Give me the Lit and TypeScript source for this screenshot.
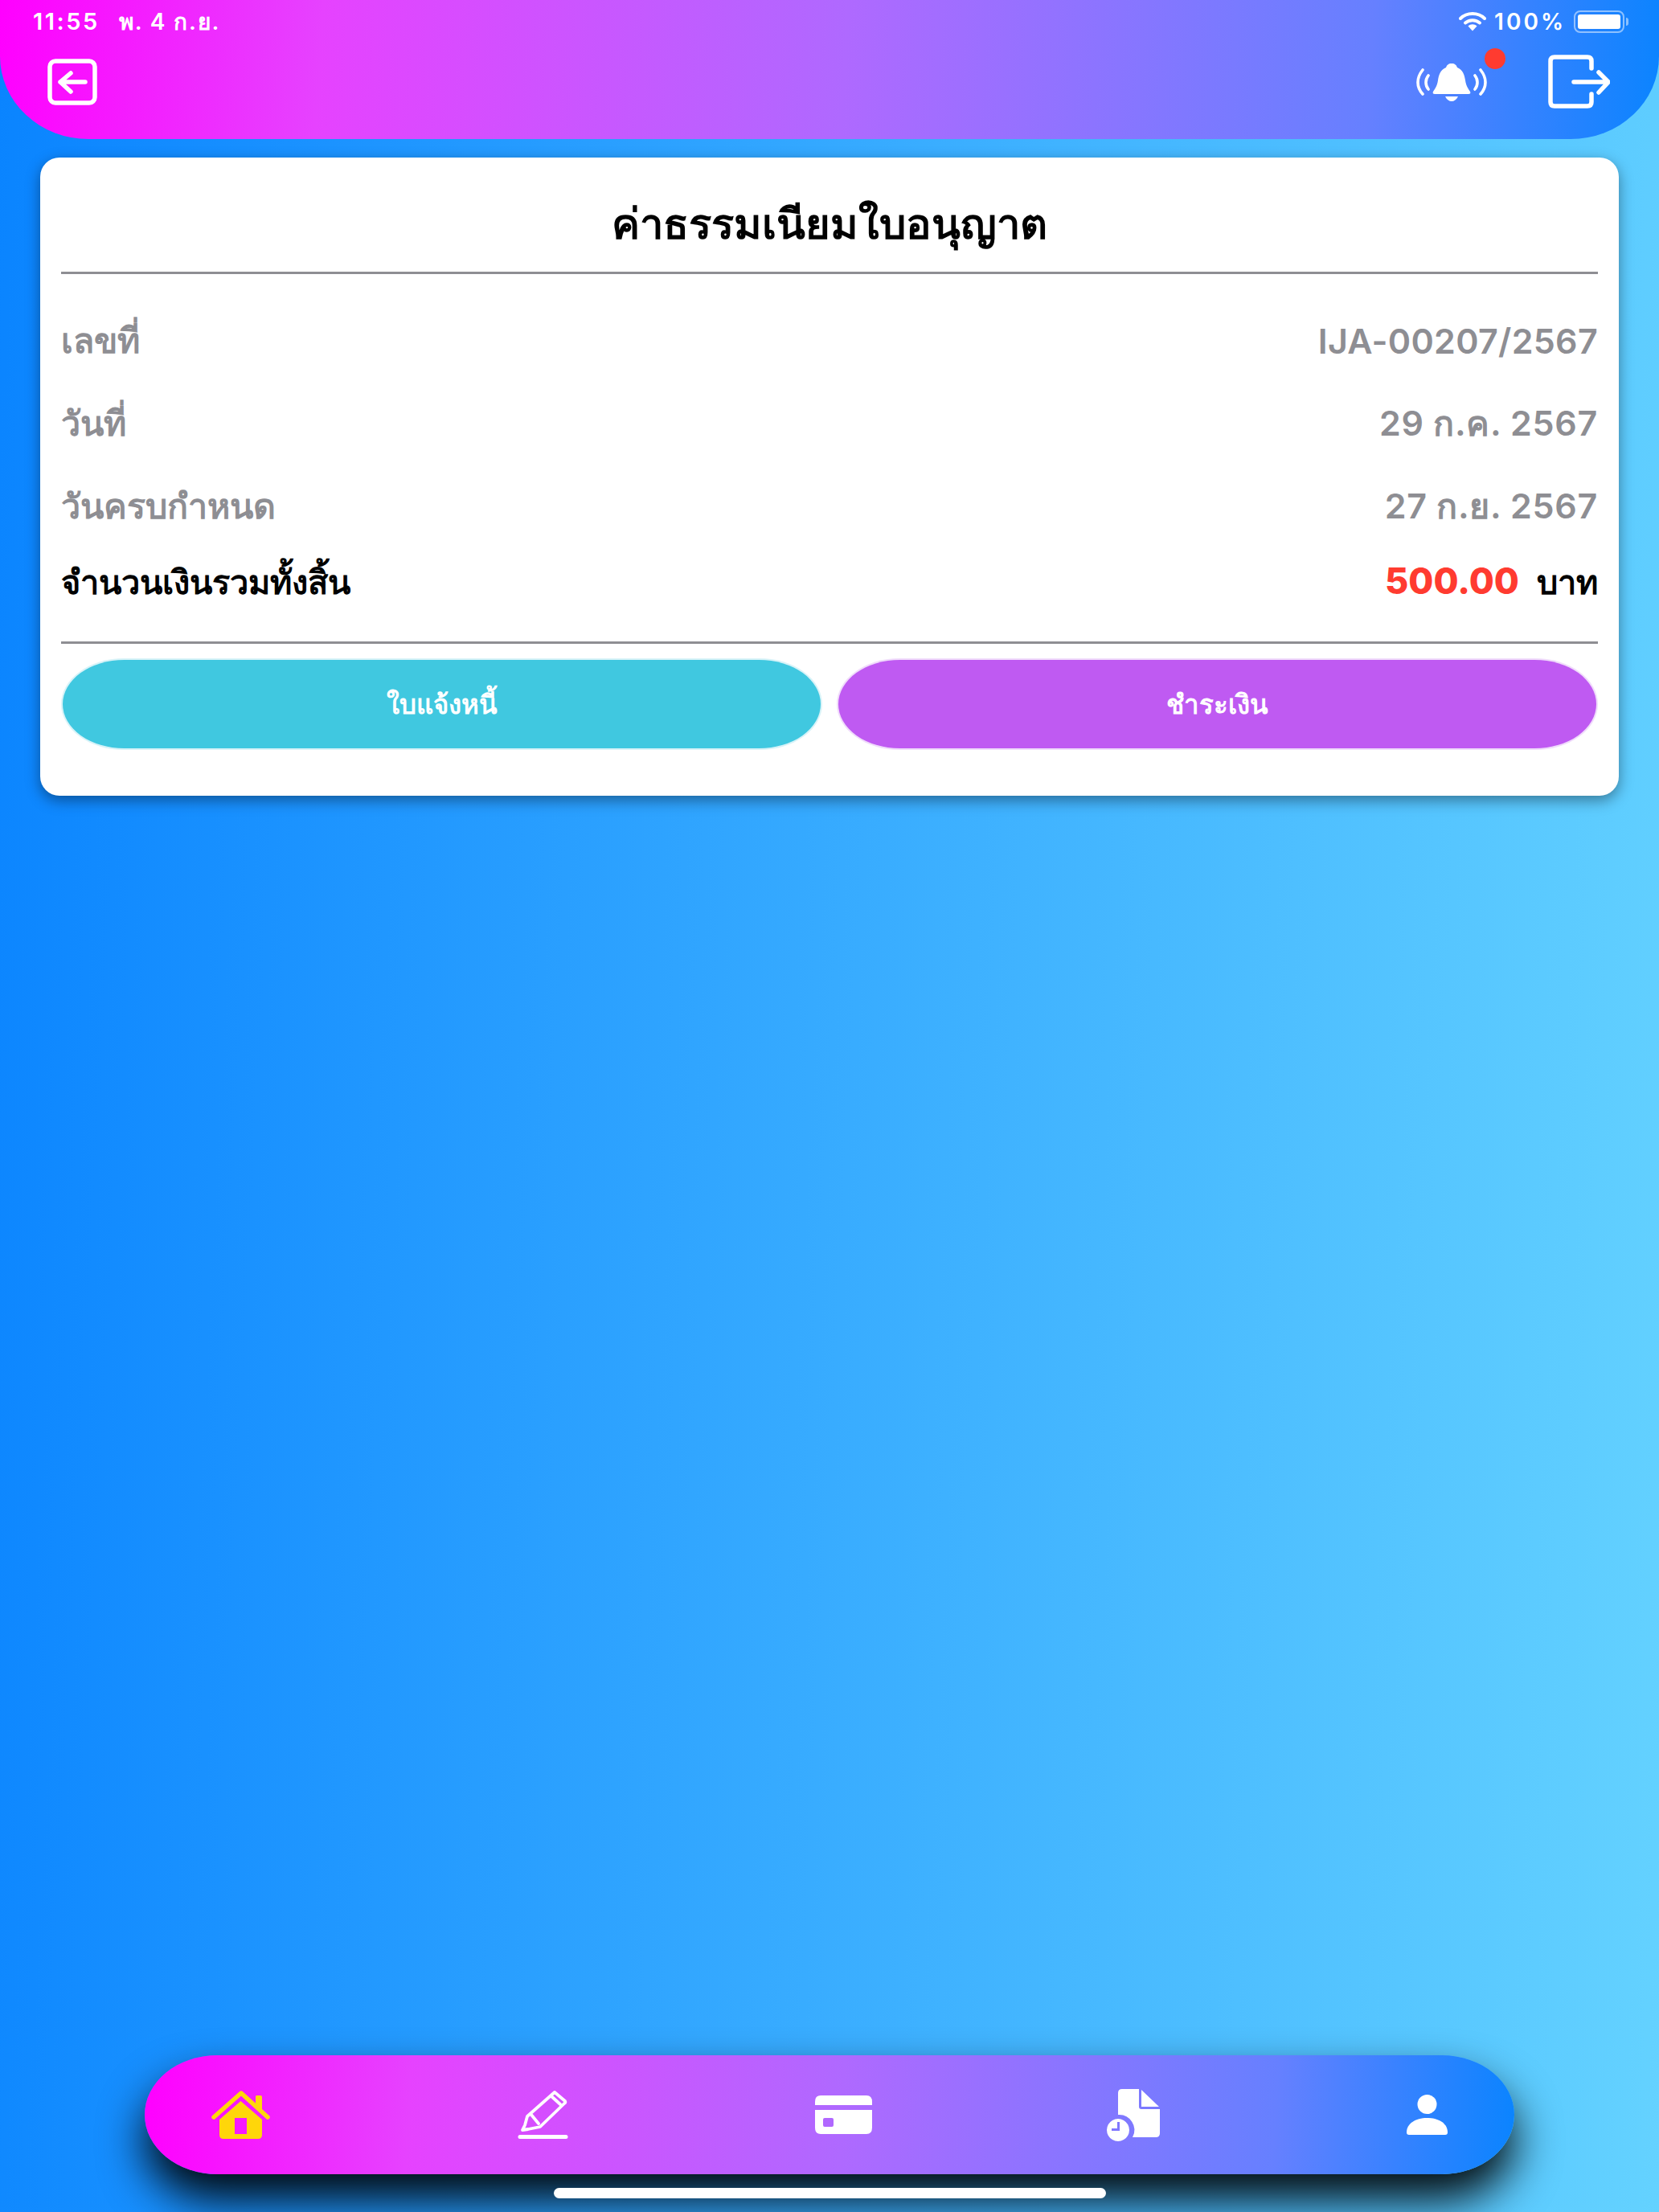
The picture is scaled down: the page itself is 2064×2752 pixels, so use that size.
import { LitElement, html, css } from "lit";
import { customElement } from "lit/decorators.js";

@customElement("app-root")
export class AppRoot extends LitElement {
  static styles = css`
    :host { display: block; width: 2064px; height: 2752px; overflow: hidden; font-family: Inter, "Noto Sans", "Liberation Sans", sans-serif; }
    svg { display: block; flex: none; }
    .page { width: 2064px; height: 2752px; display: flex; flex-direction: column; box-sizing: border-box; background: linear-gradient(93deg, #0a84ff 0%, #64d2ff 100%); }
    .header { height: 173px; box-sizing: border-box; flex: none; background: linear-gradient(94deg, #ff00ff 0%, #e642ff 19.4%, #af69ff 50.9%, #6680ff 82.4%, #0a84ff 100%); border-radius: 0 0 110px 110px / 0 0 103px 103px; display: flex; flex-direction: column; color: #fff; }
    .status { display: flex; align-items: center; height: 28px; margin-top: 13px; padding: 0 38px 0 41px; font-size: 28px; font-weight: 600; line-height: 28px; letter-spacing: 1px; }
    .time { width: 107px; font-size: 29px; letter-spacing: 2.5px; }
    .date { letter-spacing: 1.8px; }
    .spacer { flex: 1; }
    .pct { margin: 0 10px 0 10px; letter-spacing: 3px; }
    .battery { border: 2px solid rgba(255,255,255,.5); border-radius: 8px; padding: 3px; box-sizing: content-box; display: flex; width: 53px; height: 18px; }
    .battery i { display: block; flex: 1; background: #fff; border-radius: 3px; }
    .nub { width: 3px; height: 10px; margin-left: 2px; background: rgba(255,255,255,.5); border-radius: 0 3px 3px 0; }
    .actions { display: flex; align-items: flex-start; padding: 0 61px 0 59px; margin-top: 27px; }
    .back { margin-top: 5px; }
    .bell { position: relative; margin-top: 11px; margin-right: 76px; }
    .dot { position: absolute; width: 26px; height: 26px; border-radius: 50%; background: #ff3b30; left: 85px; top: -19px; }
    .card { margin: 23px 50px 0; height: 794px; box-sizing: border-box; flex: none; background: #fff; border-radius: 24px; box-shadow: 0 6px 18px rgba(0,0,0,.4); padding: 0 26px; display: flex; flex-direction: column; }
    .title { height: 145px; box-sizing: border-box; border-bottom: 3px solid #8e8e93; display: flex; align-items: center; justify-content: center; font-size: 52.500px; font-weight: 700; color: #000; padding-top: 22px; }
    .row { display: flex; justify-content: space-between; align-items: center; height: 103px; font-size: 43px; font-weight: 700; color: #8e8e93; }
    .label { font-size: 43px; }
    .value { font-weight: 600; letter-spacing: .3px; }
    .value.thai { letter-spacing: .7px; }
    .row.first { margin-top: 31px; }
    .total { margin-top: 17px; color: #000; font-weight: 700; font-size: 41.500px; border-bottom: 3px solid #8e8e93; padding-bottom: 48px; box-sizing: content-box; height: 52px; }
    .amount { color: #ff3b30; font-size: 45px; font-weight: 800; margin-right: 22px; }
    .buttons { display: flex; gap: 22px; margin-top: 20px; padding: 0 2px; }
    .btn { flex: 1; height: 110px; box-sizing: border-box; border-radius: 78px / 56px; display: flex; align-items: center; justify-content: center; color: #fff; font-size: 33px; font-weight: 700; }
    .cyan { background: #40c8e0; box-shadow: 0 0 0 2px #d8f3f8; }
    .purple { background: #bf5af2; box-shadow: 0 0 0 2px #f0dcfb; }
    .nav { margin: auto 180px 0; height: 148px; flex: none; box-sizing: border-box; padding: 0 83px; border-radius: 90px / 74px; background: linear-gradient(93deg, #ff00ff 0%, #e642ff 19.4%, #af69ff 50.9%, #6680ff 82.4%, #0a84ff 100%); box-shadow: 0 32px 56px rgba(0,0,0,.95); display: flex; align-items: center; }
    .pen { margin-left: 308px; }
    .cc { margin-left: 307px; }
    .doc { margin-left: 291px; }
    .person { margin-left: 307px; }
    .indicator { flex: none; width: 687px; height: 13px; margin: 17px auto 17px; background: #fff; border-radius: 7px; }
  `;

  render() {
    return html`
      <div class="page">
        <div class="header">
          <div class="status">
            <span class="time">11:55</span><span class="date">พ. 4 ก.ย.</span>
            <span class="spacer"></span>
            <svg width="34" height="24" viewBox="0 0 34 24" fill="none" stroke="#fff" stroke-width="4" stroke-linecap="round">
              <path d="M2 8 C10 0 24 0 32 8"/><path d="M8 13.5 C13 9 21 9 26 13.5"/><path fill="#fff" stroke="none" d="M11.5 17.5 C14.5 14.5 19.5 14.5 22.5 17.5 L17 23.5 Z"/>
            </svg>
            <span class="pct">100%</span>
            <span class="battery"><i></i></span><span class="nub"></span>
          </div>
          <div class="actions">
            <svg class="back" width="62" height="58" viewBox="0 0 62 58" fill="none" stroke="#fff" stroke-width="5.5" stroke-linecap="round" stroke-linejoin="round">
              <rect x="3" y="3" width="56" height="52" rx="7"/><path d="M47 29 H16 M29 18 L16 29 L29 41"/>
            </svg>
            <span class="spacer"></span>
            <div class="bell">
              <svg width="88" height="47" viewBox="0 0 88 47" fill="none">
                <path fill="#fff" d="M44 0 C48 0 50 2 51 5 C58 8 60 14 61 21 C62 28 65 32 67 35 C68 37 67 38 65 38 H23 C21 38 20 37 21 35 C23 32 26 28 27 21 C28 14 30 8 37 5 C38 2 40 0 44 0 Z M36 41 H52 C50 45 47 47 44 47 C41 47 38 45 36 41 Z"/>
                <path stroke="#fff" stroke-width="3.6" stroke-linecap="round" d="M15 15 C11 20 11 27 15 32 M73 15 C77 20 77 27 73 32 M8 8 C0 18 0 29 8 38 M80 8 C88 18 88 29 80 38"/>
              </svg>
              <span class="dot"></span>
            </div>
            <svg width="77" height="67" viewBox="0 0 77 67" fill="none" stroke="#fff" stroke-width="5.5" stroke-linecap="round" stroke-linejoin="round">
              <path d="M54 17 V8 Q54 3 49 3 H8 Q3 3 3 8 V59 Q3 64 8 64 H49 Q54 64 54 59 V49"/><path d="M32 34 H75 M63 22 L75 34 L63 47"/>
            </svg>
          </div>
        </div>

        <div class="card">
          <div class="title">ค่าธรรมเนียมใบอนุญาต</div>
          <div class="row first"><span class="label">เลขที่</span><span class="value">IJA-00207/2567</span></div>
          <div class="row"><span class="label">วันที่</span><span class="value thai">29 ก.ค. 2567</span></div>
          <div class="row"><span class="label">วันครบกำหนด</span><span class="value thai">27 ก.ย. 2567</span></div>
          <div class="row total"><span>จำนวนเงินรวมทั้งสิ้น</span><span><span class="amount">500.00</span>บาท</span></div>
          <div class="buttons">
            <div class="btn cyan">ใบแจ้งหนี้</div>
            <div class="btn purple">ชำระเงิน</div>
          </div>
        </div>

        <div class="nav">
          <svg width="73" height="60" viewBox="0 0 73 60">
            <path fill="none" stroke="#ffd60a" stroke-width="5.5" stroke-linecap="round" stroke-linejoin="round" d="M3 33 L37 3 L70 33"/>
            <path fill="#ffd60a" d="M55 7 Q55 6 57 6 H61 Q63 6 63 8 V24 L55 17 Z"/>
            <path fill="#ffd60a" fill-rule="evenodd" d="M36.500 13 L63 36 V55 Q63 60 58 60 H15 Q10 60 10 55 V36 Z M29 34 V54 H44 V34 Z"/>
          </svg>
          <svg class="pen" width="63" height="60" viewBox="0 0 63 60" fill="none" stroke="#fff" stroke-linejoin="round" stroke-linecap="round">
            <path stroke-width="3.800" d="M46 2 L59 13 Q60 15 58 16 L28 45 L13 48 L6 49 L9 43 L12 32 Z M42 7 L53 17 M17 30 L26 41"/>
            <path stroke-width="5" d="M3 57.500 H60"/>
          </svg>
          <svg class="cc" width="71" height="48" viewBox="0 0 71 48">
            <path fill="#fff" fill-rule="evenodd" d="M7 0 H64 Q71 0 71 8 V12 H0 V8 Q0 0 7 0 Z M0 18 H71 V40 Q71 48 64 48 H7 Q0 48 0 40 Z M12 28 Q10 28 10 30 V37 Q10 39 12 39 H21 Q23 39 23 37 V30 Q23 28 21 28 Z"/>
          </svg>
          <svg class="doc" width="67" height="65" viewBox="0 0 67 65">
            <path fill="#fff" d="M20 0 H41 V22 Q41 25 44 25 H67 V55 Q67 60 62 60 H33 A19 19 0 0 0 15 32 V5 Q15 0 20 0 Z M44 1 L66 22 H44 Z"/>
            <path fill="#fff" fill-rule="evenodd" d="M15 37 A14 14 0 1 1 14.990 37 Z M14 41 V49 H7 V52 H17 V41 Z"/>
          </svg>
          <svg class="person" width="51" height="50" viewBox="0 0 51 50">
            <ellipse fill="#fff" cx="25.500" cy="12" rx="12" ry="12"/>
            <path fill="#fff" d="M3 50 H48 Q51 50 51 47 C51 36 40 29 25.500 29 C11 29 0 36 0 47 Q0 50 3 50 Z"/>
          </svg>
        </div>
        <div class="indicator"></div>
      </div>
    `;
  }
}
